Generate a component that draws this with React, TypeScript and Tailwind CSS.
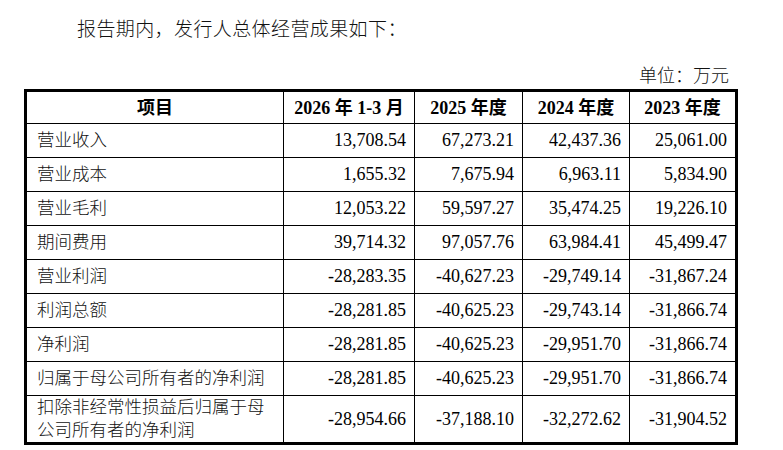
import React from 'react';

type Row = {
  label: string;
  values: string[];
  tall?: boolean;
};

const headers = ['项目', '2026 年 1-3 月', '2025 年度', '2024 年度', '2023 年度'];

const rows: Row[] = [
  { label: '营业收入', values: ['13,708.54', '67,273.21', '42,437.36', '25,061.00'] },
  { label: '营业成本', values: ['1,655.32', '7,675.94', '6,963.11', '5,834.90'] },
  { label: '营业毛利', values: ['12,053.22', '59,597.27', '35,474.25', '19,226.10'] },
  { label: '期间费用', values: ['39,714.32', '97,057.76', '63,984.41', '45,499.47'] },
  { label: '营业利润', values: ['-28,283.35', '-40,627.23', '-29,749.14', '-31,867.24'] },
  { label: '利润总额', values: ['-28,281.85', '-40,625.23', '-29,743.14', '-31,866.74'] },
  { label: '净利润', values: ['-28,281.85', '-40,625.23', '-29,951.70', '-31,866.74'] },
  { label: '归属于母公司所有者的净利润', values: ['-28,281.85', '-40,625.23', '-29,951.70', '-31,866.74'] },
  {
    label: '扣除非经常性损益后归属于母公司所有者的净利润',
    values: ['-28,954.66', '-37,188.10', '-32,272.62', '-31,904.52'],
    tall: true,
  },
];

// column widths include each cell's 1px right border (last one has none)
const colWidths = ['w-[257px]', 'w-[131px]', 'w-[108px]', 'w-[107px]', 'w-[105px]'];

export default function App() {
  return (
    <div className="min-h-[450px] w-[783px] bg-white text-black [font-family:'Liberation_Serif','Noto_Sans_CJK_SC',serif]">
      <div className="pt-[17px] pl-[77px] text-[19px] font-light leading-[26px] h-[43px] tracking-[0.4px] text-[#111]">
        报告期内，发行人总体经营成果如下：
      </div>

      <div className="ml-[24px] w-[714px]">
        <div className="mt-[21px] h-[24px] pr-[9px] text-right text-[18px] font-light leading-[24px] text-[#111]">
          单位：万元
        </div>

        <div className="mt-[1px] border-[3px] border-black">
          <table className="w-[708px] table-fixed border-separate border-spacing-0">
            <colgroup>
              {colWidths.map((w, i) => (
                <col key={i} className={w} />
              ))}
            </colgroup>
            <thead>
              <tr className="h-[32px]">
                {headers.map((h, i) => (
                  <th
                    key={h}
                    className={
                      'border-b border-black p-0 text-center align-middle text-[18px] font-bold leading-[22px] ' +
                      (i < headers.length - 1 ? 'border-r' : '')
                    }
                  >
                    {h}
                  </th>
                ))}
              </tr>
            </thead>
            <tbody>
              {rows.map((r, ri) => {
                const last = ri === rows.length - 1;
                return (
                  <tr key={r.label} className={r.tall ? 'h-[45px]' : 'h-[34px]'}>
                    <td
                      className={
                        'border-r border-black p-0 pl-[10px] pr-[6px] text-left align-middle text-[17.5px] font-light leading-[23px] text-[#111] ' +
                        (last ? '' : 'border-b')
                      }
                    >
                      {r.label}
                    </td>
                    {r.values.map((v, vi) => (
                      <td
                        key={vi}
                        className={
                          'border-black p-0 pr-[8px] text-right align-middle text-[18px] leading-[23px] ' +
                          (last ? '' : 'border-b ') +
                          (vi < r.values.length - 1 ? 'border-r' : '')
                        }
                      >
                        {v}
                      </td>
                    ))}
                  </tr>
                );
              })}
            </tbody>
          </table>
        </div>
      </div>
    </div>
  );
}
